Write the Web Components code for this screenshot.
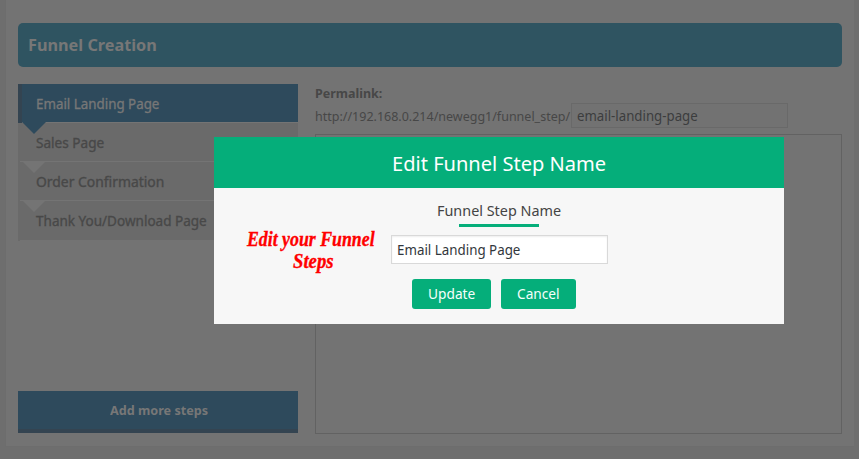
<!DOCTYPE html>
<html lang="en">
<head>
<meta charset="utf-8">
<title>Funnel Creation</title>
<style>
html,body{margin:0;width:859px;height:459px;overflow:hidden}
body{font-family:"Noto Sans","Open Sans",sans-serif}
</style>
</head>
<body>
<funnel-app></funnel-app>
<script>
class Base extends HTMLElement{
  render(html){
    const t=document.createElement('template');
    t.innerHTML='<style>*{box-sizing:border-box}</style>'+html;
    this.attachShadow({mode:'open'}).append(t.content.cloneNode(true));
  }
}
/* One line of text, scaled horizontally to the given width. */
customElements.define('fit-text',class extends Base{
  connectedCallback(){
    if(this.shadowRoot)return;
    this.render(`<style>:host{display:block;flex:none;white-space:nowrap;line-height:20px;height:20px}
      span{display:inline-block;transform-origin:0 50%}</style><span><slot></slot></span>`);
    const w=+this.getAttribute('w');
    this.style.width=w+'px';
    const s=this.shadowRoot.querySelector('span');
    s.style.transform='scaleX('+w/s.offsetWidth+')';
  }
});
customElements.define('section-title',class extends Base{
  connectedCallback(){
    this.render(`<style>:host{display:flex;align-items:center;height:44px;padding-left:10px;border-radius:5px;background:#2f5461;color:#777;font-size:16px;font-weight:700;box-sizing:border-box}</style><slot></slot>`);
  }
});
customElements.define('step-item',class extends Base{
  connectedCallback(){
    this.render(`<style>
      :host{display:block;position:relative;height:39px;box-sizing:border-box;padding:10px 0 0 18px;background:linear-gradient(#747474,#747474) 2px 38px/278px 1px no-repeat #6a6a6a;color:#484848;font-size:14px;-webkit-text-stroke:.35px currentColor}
      :host([active]){background:linear-gradient(#344451,#344451) 0 0/4px 39px no-repeat,linear-gradient(#747474,#747474) 4px 38px/276px 1px no-repeat #2e4a5c;color:#777}
      :host([last]){height:40px;background:linear-gradient(#737373,#737373) 2px 39px/278px 1px no-repeat #6a6a6a}
      i{position:absolute;left:4px;top:38px;width:24px;height:12px;background:#747474;clip-path:polygon(0 0,100% 0,50% 100%)}
      :host([active]) i{background:#2e4a5c}
      :host([last]) i{display:none}
      </style><i></i><fit-text w="${this.getAttribute('w')}">${this.getAttribute('label')}</fit-text>`);
  }
});
customElements.define('add-button',class extends Base{
  connectedCallback(){
    this.render(`<style>:host{display:flex;justify-content:center;align-items:center;height:42px;box-sizing:border-box;border-bottom:4px solid #344451;background:#2e4a5c;color:#777;font-size:12.5px;font-weight:700;padding:1px 0 0 1px}</style><slot></slot>`);
  }
});
customElements.define('text-field',class extends Base{
  connectedCallback(){
    this.render(`<style>:host{display:flex;align-items:center;width:217px;height:29px;box-sizing:border-box;border:1px solid #d9d9d9;padding-left:5px;background:#fff;box-shadow:inset 0 1px 2px rgba(0,0,0,.07);color:#32373c;font-size:14px}
      :host([dim]){height:25px;border-color:#696969;background:#727272;box-shadow:none;color:#3c3d3e}</style><slot></slot>`);
  }
});
customElements.define('action-button',class extends Base{
  connectedCallback(){
    this.render(`<style>:host{display:flex;align-items:center;justify-content:center;height:30px;padding:0 16px;border-radius:3px;background:#05ae7a;color:#f4fffb;font-size:14px}</style><slot></slot>`);
  }
});
customElements.define('funnel-editor',class extends Base{
  connectedCallback(){
    this.render(`<style>
      :host{display:flex;flex-direction:column;width:849px;height:447px;margin-left:5px;box-sizing:border-box;border:solid #6d6d6d;border-width:0 0 1px 1px;background:#737373;padding:23px 12px 12px}
      .cols{display:flex;gap:17px;margin-top:17px}
      nav{display:flex;flex-direction:column;width:280px;height:349px}
      add-button{margin-top:auto}
      main{width:527px;height:350px;display:flex;flex-direction:column;color:#474747;font-size:12.5px}
      .url{display:flex;align-items:center;gap:1px;height:25px}
      .url>fit-text{margin-top:2px}
      .area{flex:1;margin-top:6px;border:1px solid #626262}
      </style>
      <section-title><fit-text w="129">Funnel Creation</fit-text></section-title>
      <div class="cols">
        <nav>
          <step-item active style="z-index:4" w="123" label="Email Landing Page"></step-item>
          <step-item style="z-index:3" w="68" label="Sales Page"></step-item>
          <step-item style="z-index:2" w="128" label="Order Confirmation"></step-item>
          <step-item last style="z-index:1" w="171" label="Thank You/Download Page"></step-item>
          <add-button><fit-text w="98">Add more steps</fit-text></add-button>
        </nav>
        <main>
          <fit-text w="67" style="font-weight:700;height:19px">Permalink:</fit-text>
          <div class="url"><fit-text w="255">http://192.168.0.214/newegg1/funnel_step/</fit-text><text-field dim><fit-text w="121">email-landing-page</fit-text></text-field></div>
          <div class="area"></div>
        </main>
      </div>`);
  }
});
customElements.define('step-dialog',class extends Base{
  connectedCallback(){
    this.render(`<style>
      :host{display:block;position:absolute;z-index:10;left:214px;top:137px;width:570px;height:187px;background:#f7f7f7;color:#444}
      header{height:51px;display:flex;justify-content:center;align-items:center;padding-top:2px;background:#05ae7a;color:#fff;font-size:19.5px}
      .body{display:flex;padding-left:33px}
      .note{width:128px;margin-top:40px;display:flex;flex-direction:column;align-items:center;color:#f00;font:italic 700 21px "Liberation Serif",serif;-webkit-text-stroke:.35px #f00}
      .note fit-text{line-height:22px;height:22px}
      .note fit-text+fit-text{margin-left:4px}
      .form{width:217px;margin-left:16px;display:flex;flex-direction:column;align-items:center;font-size:14.5px}
      .form>fit-text{margin:12px 1px 0 0}
      hr{width:80px;height:3px;margin:4px 69px 8px 68px;border:0;background:#05ae7a}
      .actions{display:flex;gap:10px;margin-top:15px;padding-right:11px}
      </style>
      <header><fit-text w="214">Edit Funnel Step Name</fit-text></header>
      <div class="body">
        <div class="note"><fit-text w="128">Edit your Funnel</fit-text><fit-text w="41">Steps</fit-text></div>
        <div class="form">
          <fit-text w="124">Funnel Step Name</fit-text><hr>
          <text-field><fit-text w="123">Email Landing Page</fit-text></text-field>
          <div class="actions"><action-button><fit-text w="47">Update</fit-text></action-button><action-button><fit-text w="43">Cancel</fit-text></action-button></div>
        </div>
      </div>`);
  }
});
customElements.define('funnel-app',class extends Base{
  connectedCallback(){
    this.render(`<style>:host{display:block;position:relative;width:859px;height:459px;background:#6e6e6e;overflow:hidden}</style>
      <funnel-editor></funnel-editor><step-dialog></step-dialog>`);
  }
});
</script>
</body>
</html>
